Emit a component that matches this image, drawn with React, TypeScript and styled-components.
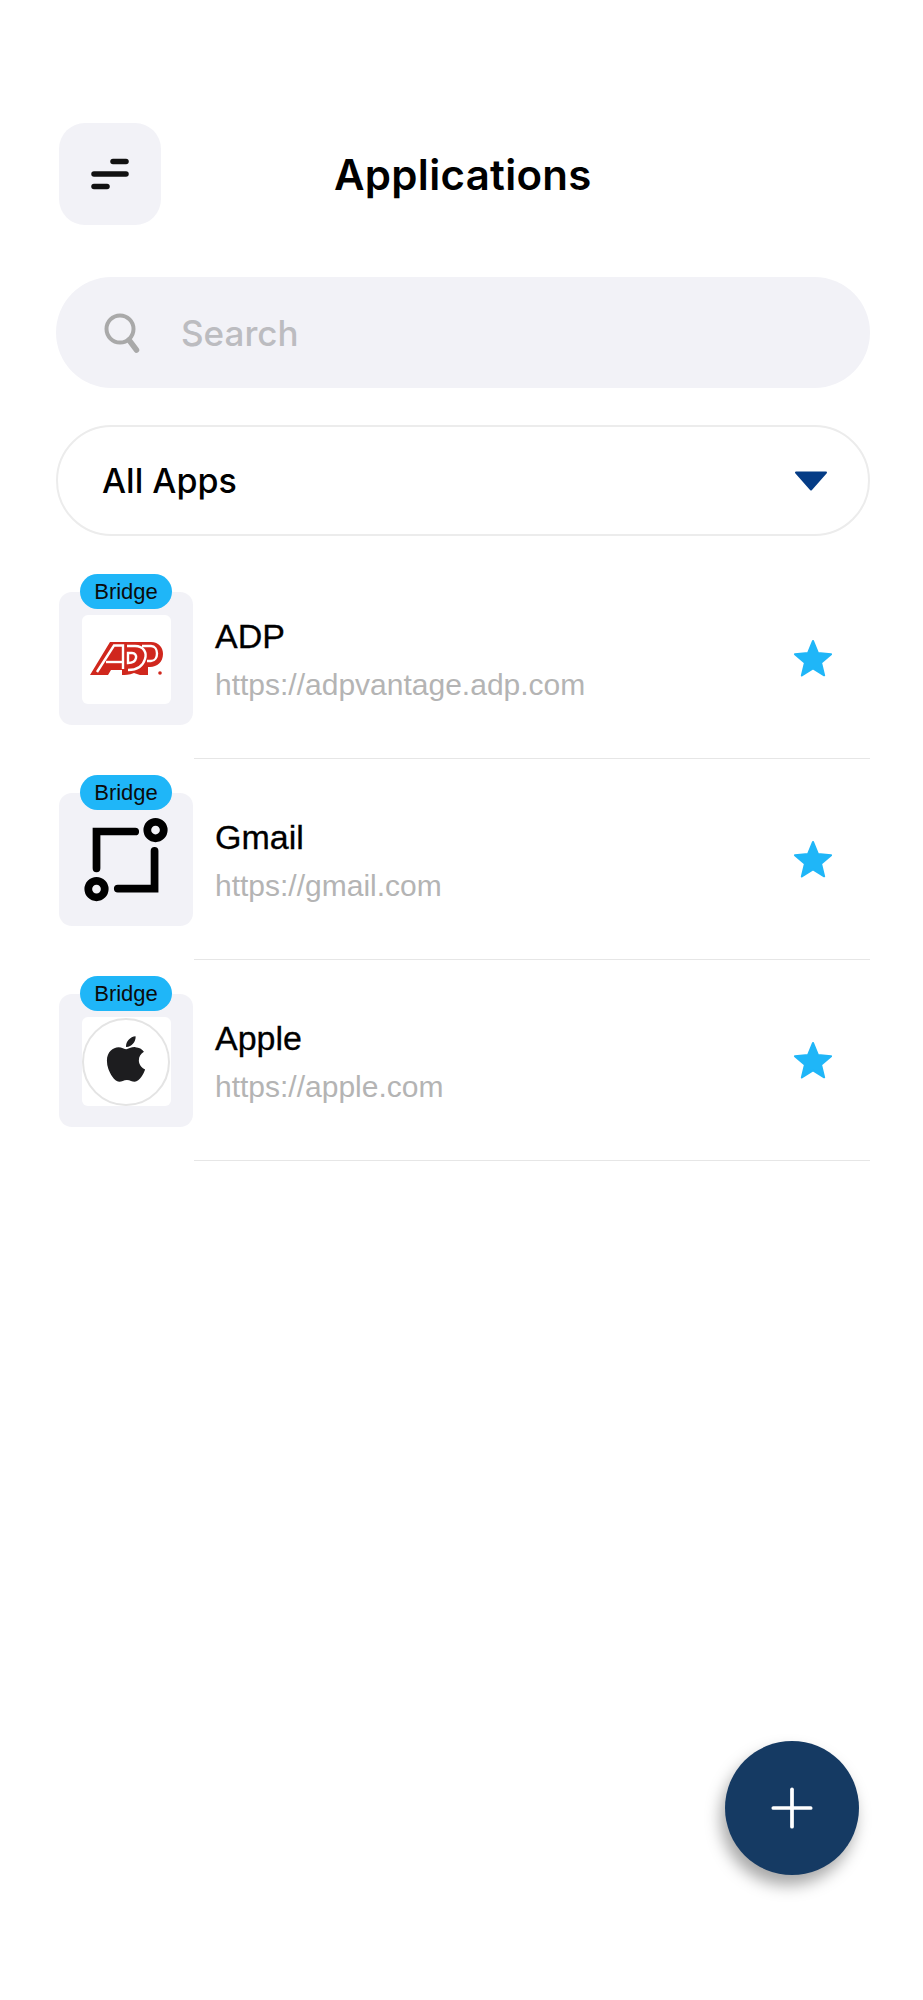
import styled, { createGlobalStyle } from 'styled-components'
import { Plus } from 'lucide-react'
import { FaApple } from 'react-icons/fa'

const GlobalStyle = createGlobalStyle`
  html, body {
    margin: 0;
    padding: 0;
    background: #fff;
  }
`

const Page = styled.main`
  position: relative;
  width: 923px;
  height: 2000px;
  box-sizing: border-box;
  padding: 123px 53px 0 56px;
  font-family: 'Liberation Sans', Arial, sans-serif;
  overflow: hidden;
`

const Header = styled.header`
  display: flex;
  align-items: center;
  height: 102px;
  padding-left: 3px;
`

const MenuButton = styled.button`
  width: 102px;
  height: 102px;
  flex: none;
  display: flex;
  align-items: center;
  justify-content: center;
  padding: 0;
  border: 0;
  border-radius: 26px;
  background: #f2f2f7;
`

const Title = styled.h1`
  margin: 0 0 0 173px;
  font-family: Inter, sans-serif;
  font-size: 42px;
  font-weight: 600;
  letter-spacing: 0.3px;
  color: #000;
`

const SearchBar = styled.div`
  display: flex;
  align-items: center;
  height: 111px;
  margin-top: 52px;
  padding-left: 48px;
  border-radius: 56px;
  background: #f2f2f7;
`

const SearchText = styled.span`
  margin-left: 41px;
  font-family: Inter, sans-serif;
  font-size: 35px;
  font-weight: 500;
  color: #bcbcc0;
`

const Select = styled.div`
  display: flex;
  align-items: center;
  justify-content: space-between;
  box-sizing: border-box;
  height: 111px;
  margin-top: 37px;
  padding: 0 40px 0 44px;
  border: 2px solid #ececec;
  border-radius: 56px;
`

const SelectLabel = styled.span`
  font-family: Inter, sans-serif;
  font-size: 34px;
  font-weight: 500;
  color: #000;
`

const List = styled.ul`
  margin: 22px 0 0;
  padding: 0;
  list-style: none;
`

const Row = styled.li`
  display: flex;
  height: 201px;
  padding-left: 3px;
  box-sizing: border-box;
`

const Tile = styled.div`
  position: relative;
  flex: none;
  align-self: flex-start;
  display: flex;
  align-items: center;
  justify-content: center;
  box-sizing: border-box;
  width: 134px;
  height: 133px;
  margin-top: 34px;
  padding-top: 2px;
  border-radius: 13px;
  background: #f2f2f7;
`

const Badge = styled.span`
  position: absolute;
  top: -18px;
  left: 21px;
  width: 92px;
  height: 35px;
  border-radius: 18px;
  background: #1fb6f8;
  color: #0b0b0b;
  font-size: 22px;
  line-height: 35px;
  text-align: center;
`

const LogoBox = styled.div<{ $plain?: boolean }>`
  display: flex;
  align-items: center;
  justify-content: center;
  width: 89px;
  height: 89px;
  border-radius: 6px;
  background: ${(p) => (p.$plain ? 'transparent' : '#fff')};
`

const AppleRing = styled.div`
  display: flex;
  align-items: center;
  justify-content: center;
  box-sizing: border-box;
  width: 88px;
  height: 88px;
  padding-bottom: 6px;
  border: 2px solid #e4e4e4;
  border-radius: 50%;
  color: #1d1d1f;
`

const RowBody = styled.div`
  flex: 1;
  display: flex;
  align-items: center;
  justify-content: space-between;
  padding: 0 37px 0 21px;
  margin-left: 1px;
  border-bottom: 1px solid #e6e6e6;
`

const RowText = styled.div`
  margin-top: 3px;
`

const AppName = styled.div`
  font-size: 34px;
  line-height: 37px;
  color: #000;
  -webkit-text-stroke: 0.3px #000;
`

const AppUrl = styled.div`
  margin-top: 13px;
  font-size: 30px;
  line-height: 34px;
  color: #b4b4b4;
`

const StarSvg = styled.svg`
  margin-top: 2px;
`

const Fab = styled.button`
  position: absolute;
  left: 725px;
  top: 1741px;
  width: 134px;
  height: 134px;
  display: flex;
  align-items: center;
  justify-content: center;
  padding: 0;
  border: 0;
  border-radius: 50%;
  background: #153a63;
  color: #fff;
  box-shadow: -4px 10px 16px rgba(0, 0, 0, 0.35);
`

const apps = [
  { name: 'ADP', url: 'https://adpvantage.adp.com', logo: 'adp' },
  { name: 'Gmail', url: 'https://gmail.com', logo: 'gmail' },
  { name: 'Apple', url: 'https://apple.com', logo: 'apple' },
]

function MenuIcon() {
  return (
    <svg width="38" height="34" viewBox="0 0 38 34" fill="none" stroke="#111" strokeWidth="5.5" strokeLinecap="round">
      <path d="M22 4.5H35" />
      <path d="M3 17H35" />
      <path d="M3 29.5H16" />
    </svg>
  )
}

function SearchIcon() {
  return (
    <svg width="36" height="40" viewBox="0 0 36 40" fill="none" stroke="#a9a9a9">
      <circle cx="16" cy="16" r="13.5" strokeWidth="4" />
      <path d="M25 27L32.5 37" strokeWidth="5.5" strokeLinecap="round" />
    </svg>
  )
}

function Caret() {
  return (
    <svg width="34" height="20" viewBox="0 0 34 20">
      <path d="M2 1.5H32L17 18.5Z" fill="#053c86" stroke="#053c86" strokeWidth="2" strokeLinejoin="round" />
    </svg>
  )
}

function StarIcon() {
  return (
    <StarSvg width="40" height="40" viewBox="0 0 40 40">
      <path
        d="M20 2L25 14.12L38.07 15.13L28.08 23.63L31.17 36.37L20 29.5L8.83 36.37L11.92 23.63L1.93 15.13L15 14.12Z"
        fill="#1fb6f8"
        stroke="#1fb6f8"
        strokeWidth="2"
        strokeLinejoin="round"
      />
    </StarSvg>
  )
}

function AdpLogo() {
  return (
    <svg width="89" height="89" viewBox="0 0 89 89">
      <path
        d="M8 60L28 27H69C77 27 81 33 81 39C81 47 75 52 68 52H66V60H58L52 58C47 60 43 60 40 60V55H29L26 60Z"
        fill="#d0271d"
      />
      <g fill="none" stroke="#fff" strokeWidth="2.4">
        <path d="M15 57L32 30.5H41V54" />
        <path d="M24 47H41" />
        <path d="M45 31H53C62 31 65 38 63 44C61 51 55 55 46 55" />
        <path d="M46 38H50C56 38 56 48 46 48Z" />
        <path d="M60 31H69C77 31 77 46 69 46H65" />
      </g>
      <circle cx="78" cy="58" r="1.8" fill="#d0271d" />
    </svg>
  )
}

function GmailLogo() {
  return (
    <svg width="92" height="92" viewBox="0 0 92 92" fill="none" stroke="#000" strokeWidth="8" strokeLinecap="round">
      <path d="M15 53.5V15.5H55" />
      <path d="M75 35.5V74.5H37" />
      <circle cx="76" cy="14" r="8.5" />
      <circle cx="15" cy="75" r="8.5" />
    </svg>
  )
}

function AppLogo({ logo }: { logo: string }) {
  if (logo === 'adp') {
    return (
      <LogoBox>
        <AdpLogo />
      </LogoBox>
    )
  }
  if (logo === 'gmail') {
    return (
      <LogoBox $plain>
        <GmailLogo />
      </LogoBox>
    )
  }
  return (
    <LogoBox>
      <AppleRing>
        <FaApple size={52} />
      </AppleRing>
    </LogoBox>
  )
}

export default function App() {
  return (
    <Page>
      <GlobalStyle />
      <Header>
        <MenuButton aria-label="Menu">
          <MenuIcon />
        </MenuButton>
        <Title>Applications</Title>
      </Header>
      <SearchBar>
        <SearchIcon />
        <SearchText>Search</SearchText>
      </SearchBar>
      <Select>
        <SelectLabel>All Apps</SelectLabel>
        <Caret />
      </Select>
      <List>
        {apps.map((app) => (
          <Row key={app.name}>
            <Tile>
              <Badge>Bridge</Badge>
              <AppLogo logo={app.logo} />
            </Tile>
            <RowBody>
              <RowText>
                <AppName>{app.name}</AppName>
                <AppUrl>{app.url}</AppUrl>
              </RowText>
              <StarIcon />
            </RowBody>
          </Row>
        ))}
      </List>
      <Fab aria-label="Add">
        <Plus size={64} strokeWidth={1.4} />
      </Fab>
    </Page>
  )
}
